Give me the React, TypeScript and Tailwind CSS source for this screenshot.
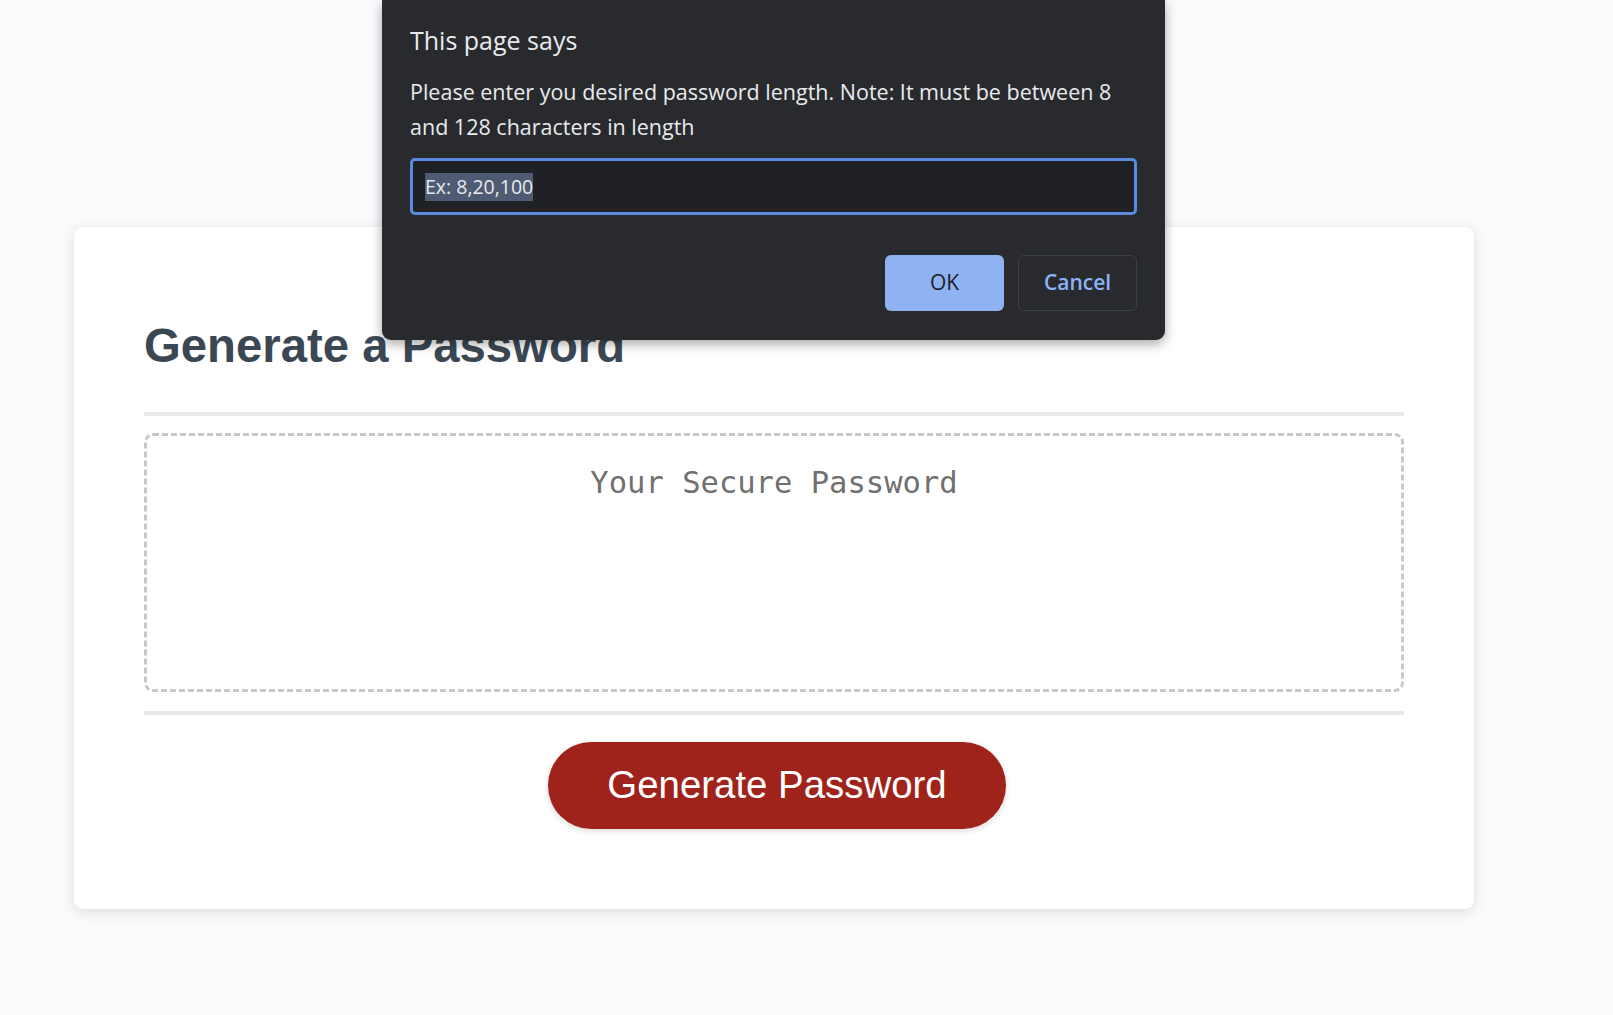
export default function App() {
  return (
    <div className="relative min-h-[1015px] bg-[#f9fbfd] pt-[227px] font-['Liberation_Sans',Arial,sans-serif]">
      {/* card */}
      <div className="ml-[74px] w-[1400px] rounded-[9px] bg-white px-[70px] pt-[92px] pb-[80px] text-[#3b4854] shadow-[0_3px_14px_rgba(0,0,0,0.13)]">
        <h2 className="h-[54px] text-[47.3px] font-bold leading-[54px]">Generate a Password</h2>
        <div className="mt-[39px] h-[4px] bg-[#e7e9eb]" />
        <textarea
          readOnly
          placeholder="Your Secure Password"
          className="mt-[17px] block h-[259px] w-full resize-none overflow-hidden rounded-[9px] border-[3.5px] border-dashed border-[#c6c8cb] px-[26px] pt-[27px] text-center font-['DejaVu_Sans_Mono',monospace] text-[30.5px] leading-[40px] outline-none placeholder:text-[#707070]"
        />
        <div className="mt-[19px] h-[4px] bg-[#e7e9eb]" />
        <div className="flex justify-center pt-[27px] pl-[6px]">
          <button className="h-[87px] w-[458px] rounded-full bg-[#9f231a] text-[38.4px] leading-none text-white shadow-[0_2px_6px_rgba(0,0,0,0.15)]">
            Generate Password
          </button>
        </div>
      </div>

      {/* browser prompt dialog */}
      <div className="absolute left-[382px] top-0 w-[783px] rounded-b-[9px] bg-[#292a2d] px-[28px] pt-[22px] pb-[29px] font-['Open_Sans',sans-serif] text-[#e8eaed] shadow-[0_4px_12px_rgba(0,0,0,0.35)]">
        <div className="text-[25px] leading-[36px]">This page says</div>
        <div className="mt-[16px] text-[21.5px] leading-[35px]">
          Please enter you desired password length. Note: It must be between 8
          <br />
          and 128 characters in length
        </div>
        <div className="mt-[14px] flex h-[57px] items-center rounded-[5px] border-[3px] border-[#5a8be0] bg-[#202124] pl-[12px]">
          <span className="bg-[#4f5b73] text-[19.5px] leading-[28px] text-[#e8eaed]">Ex: 8,20,100</span>
        </div>
        <div className="mt-[40px] flex justify-end gap-[14px]">
          <button className="h-[56px] w-[119px] rounded-[6px] bg-[#8fb2f3] text-[21px] font-medium text-[#202124]">OK</button>
          <button className="h-[56px] w-[119px] rounded-[6px] border border-[#3c4043] text-[21px] font-semibold text-[#8ab4f8]">Cancel</button>
        </div>
      </div>
    </div>
  );
}
